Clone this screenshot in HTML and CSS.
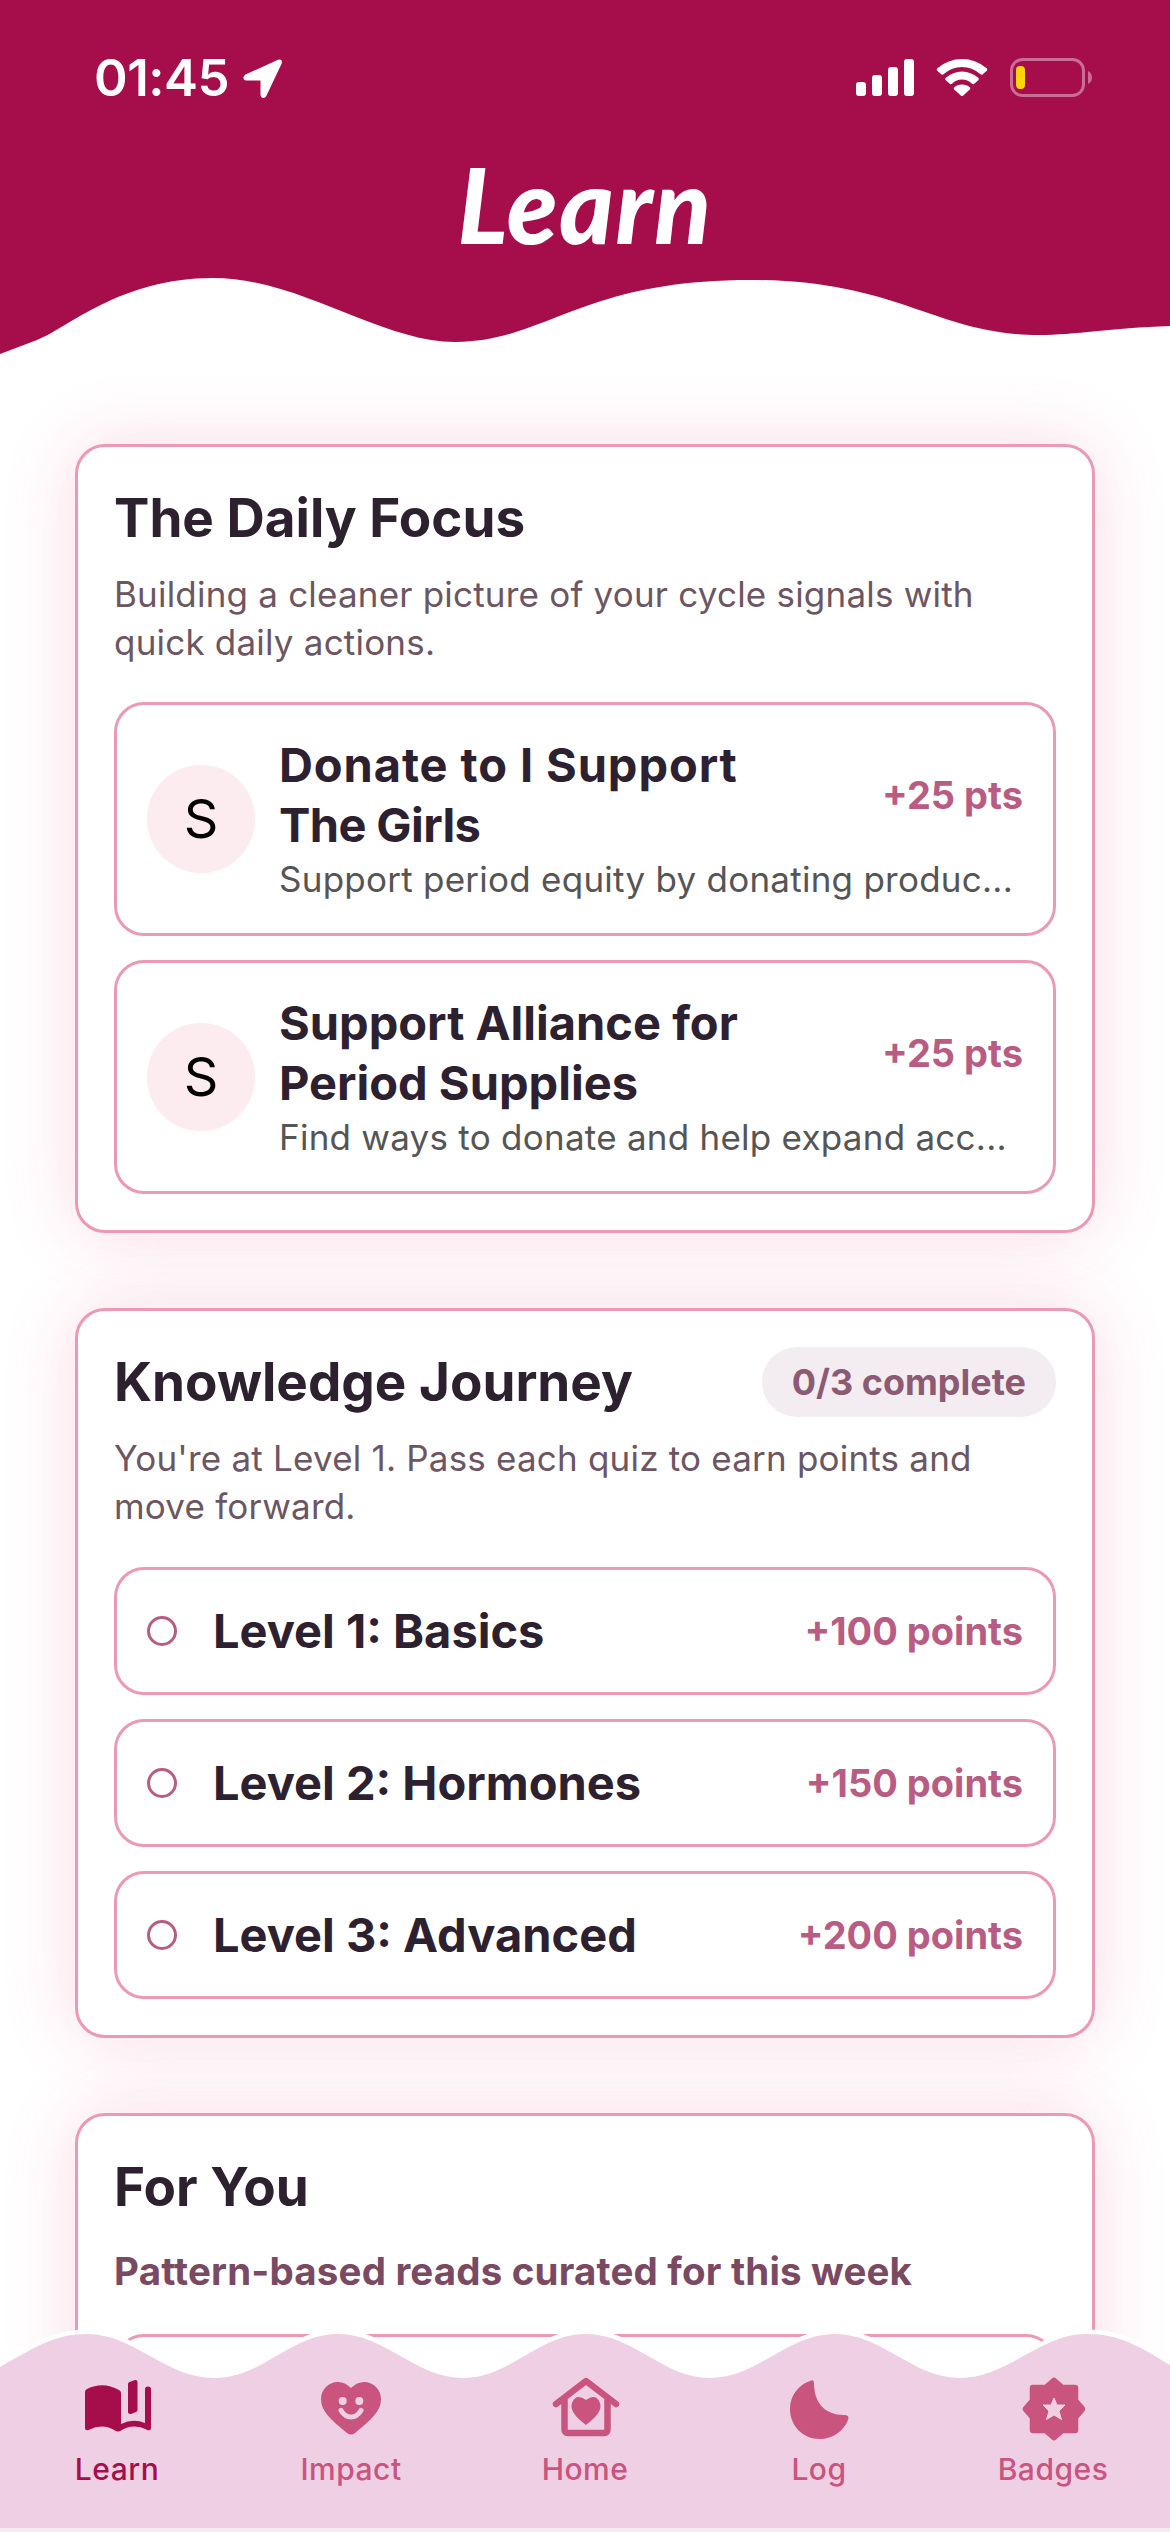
FILE: index.html
```html
<!DOCTYPE html>
<html lang="en">
<head>
  <meta charset="UTF-8">
  <meta name="viewport" content="width=device-width, initial-scale=1.0">
  <title>Learn</title>
  <link rel="stylesheet" href="styles.css">
</head>
<body>
  <header class="header">
    <div class="status-bar">
      <div class="status-left">
        <span class="time">01:45</span>
        <svg class="location" width="40" height="40" viewBox="0 0 40 40"><path d="M35 .8L2.500 15.500Q-.5 17.500 .8 20.200Q1.600 21.500 4 21.500H17.500V35.500Q17.800 39 20.500 39Q22.300 39 23.300 37L38.700 4.500Q39.700 -.8 35 .8Z" fill="#fff"/></svg>
      </div>
      <div class="status-right">
        <svg width="58" height="37" viewBox="0 0 58 37" fill="#fff"><rect x="0" y="23" width="10" height="14" rx="3"/><rect x="16" y="16" width="10" height="21" rx="3"/><rect x="32" y="8" width="10" height="29" rx="3"/><rect x="48" y="0" width="10" height="37" rx="3"/></svg>
        <svg width="52" height="37" viewBox="0 0 52 37" fill="#fff"><path d="M1 9.500Q12 0 26 0T51 9.500Q51.500 10.500 51 11.500L46.500 15.500Q45.500 16 44.500 15.200Q36 8 26 8T7.500 15.200Q6.500 16 5.500 15.500L1 11.500Q.5 10.500 1 9.500Z"/><path d="M9.500 19Q17 12.500 26 12.500T42.500 19Q43 20 42.500 21L38 25Q37 25.500 36 24.700Q31.500 20.500 26 20.500T16 24.700Q15 25.500 14 25L9.500 21Q9 20 9.500 19Z"/><path d="M18 28.500Q21 25.500 26 25.500T34 28.500Q34.500 29.500 34 30.300L27 36.700Q26 37.500 25 36.700L18 30.300Q17.500 29.500 18 28.500Z"/></svg>
        <svg width="82" height="39" viewBox="0 0 82 39"><rect x="1.500" y="1.500" width="72" height="36" rx="11" fill="none" stroke="#cc6b94" stroke-width="3"/><rect x="6" y="8" width="9" height="23" rx="4" fill="#ffd60a"/><path d="M78 13V26Q82 24 82 19.500T78 13Z" fill="#cc6b94"/></svg>
      </div>
    </div>
    <h1 class="page-title">Learn</h1>
    <svg class="header-wave" width="1170" height="90" viewBox="0 0 1170 90"><path d="M0 84L37 70C68 58 120 8 213 8C300 8 380 72 455 72C545 72 580 10 750 10C900 10 935 65 1039 65C1075 65 1110 58 1170 56V90H0Z" fill="#fff"/></svg>
  </header>

  <main class="content">
    <section class="card">
      <div class="card-head">
        <h2 class="card-title">The Daily Focus</h2>
      </div>
      <p class="card-text">Building a cleaner picture of your cycle signals with<br>quick daily actions.</p>
      <div class="list">
        <div class="item task">
          <span class="avatar">S</span>
          <div class="task-body">
            <div class="task-top">
              <h3 class="item-title donate">Donate to I Support<br>The Girls</h3>
              <span class="points">+25 pts</span>
            </div>
            <p class="task-text">Support period equity by donating produc...</p>
          </div>
        </div>
        <div class="item task">
          <span class="avatar">S</span>
          <div class="task-body">
            <div class="task-top">
              <h3 class="item-title">Support Alliance for<br>Period Supplies</h3>
              <span class="points">+25 pts</span>
            </div>
            <p class="task-text">Find ways to donate and help expand acc...</p>
          </div>
        </div>
      </div>
    </section>

    <section class="card">
      <div class="card-head">
        <h2 class="card-title">Knowledge Journey</h2>
        <span class="pill">0/3 complete</span>
      </div>
      <p class="card-text">You're at Level 1. Pass each quiz to earn points and<br>move forward.</p>
      <div class="list levels">
        <div class="item level">
          <span class="ring"></span>
          <h3 class="item-title">Level 1: Basics</h3>
          <span class="points">+100 points</span>
        </div>
        <div class="item level">
          <span class="ring"></span>
          <h3 class="item-title">Level 2: Hormones</h3>
          <span class="points">+150 points</span>
        </div>
        <div class="item level">
          <span class="ring"></span>
          <h3 class="item-title">Level 3: Advanced</h3>
          <span class="points">+200 points</span>
        </div>
      </div>
    </section>

    <section class="card">
      <div class="card-head">
        <h2 class="card-title">For You</h2>
      </div>
      <p class="card-note">Pattern-based reads curated for this week</p>
      <div class="list reads">
        <div class="item read"></div>
      </div>
    </section>
  </main>

  <nav class="tab-bar">
    <svg class="tab-wave" width="1170" height="60" viewBox="0 0 1170 60">
      <path d="M0 42C35 22 55 9 87 9C135 9 165 53 214 53S290 9 338 9S415 53 463 53S538 9 586 9S662 53 710 53S787 9 835 9S912 53 960 53S1039 9 1087 9C1120 9 1140 22 1170 40V60H0Z" fill="#efcfe3" stroke="#fff" stroke-width="9" paint-order="stroke"/>
    </svg>
    <div class="tabs">
      <a class="tab active">
        <svg width="72" height="72" viewBox="0 0 72 72" fill="currentColor"><path d="M4 19Q4 17 6 16Q22 8 38 17Q40 18 40 20V51Q52 45 64 50V16Q64 13.500 67 13.500T70 16V55Q70 58 66.500 57Q52 50 40 57.500Q37 59.500 34 57.500Q22 50 7.500 57Q4 58 4 55Z"/><path d="M47 11Q47 9.500 48.500 9L54 7Q56.500 6.500 56.500 9V37Q56.500 38.500 55 39L50 41Q47 41.500 47 39Z"/></svg>
        <span>Learn</span>
      </a>
      <a class="tab">
        <svg width="72" height="72" viewBox="0 0 72 72"><path d="M36 15Q30 9 23 9C13 9 6 17 6 26C6 38 15 46 32 60Q36 63 40 60C57 46 66 38 66 26C66 17 59 9 49 9Q42 9 36 15Z" fill="currentColor"/><circle cx="27.700" cy="28" r="4" fill="#efcfe3"/><circle cx="44.300" cy="28" r="4" fill="#efcfe3"/><path d="M26 37.500Q30 44 36 44T46 37.500" fill="none" stroke="#efcfe3" stroke-width="5" stroke-linecap="round"/></svg>
        <span>Impact</span>
      </a>
      <a class="tab">
        <svg width="72" height="72" viewBox="0 0 72 72"><path d="M7 31L37 8L67 31M15.500 26V56Q15.500 60 19 60H55Q58.500 60 58.500 56V26" fill="none" stroke="currentColor" stroke-width="6.500" stroke-linecap="round" stroke-linejoin="round"/><path d="M37 27Q27 20 23 30C20 39 31 47 37 52C43 47 54 39 51 30Q47 20 37 27Z" fill="currentColor"/></svg>
        <span>Home</span>
      </a>
      <a class="tab">
        <svg width="72" height="72" viewBox="0 0 72 72"><path d="M27 8Q31 6 31 10C31 30 42 42 61 42Q67 42 65 47C61 58 49 66 37 66C20 66 7 53 7 36C7 23 15 12 27 8Z" fill="currentColor"/></svg>
        <span>Log</span>
      </a>
      <a class="tab">
        <svg width="72" height="72" viewBox="0 0 72 72"><path d="M37 8L45 15H58V28L65 36L58 44V57H45L37 64L29 57H16V44L9 36L16 28V15H29Z" fill="currentColor" stroke="currentColor" stroke-width="6.500" stroke-linejoin="round"/><path d="M37 25L40 32H48L42 38L44.500 46.500L37 42L29.500 46.500L32 38L26 32H34Z" fill="#efcfe3" stroke="#efcfe3" stroke-linejoin="round"/></svg>
        <span>Badges</span>
      </a>
    </div>
  </nav>
</body>
</html>
```

FILE: styles.css
```css
* {
  box-sizing: border-box;
}

body {
  margin: 0;
  width: 1170px;
  height: 2532px;
  overflow: hidden;
  position: relative;
  background: #fff;
  font-family: Inter, "Liberation Sans", sans-serif;
  color: #2d2130;
}

h1, h2, h3, p {
  margin: 0;
}

svg {
  display: block;
  flex: none;
}

/* header */
.header {
  height: 360px;
  background: #a50e4b;
  color: #fff;
  display: flex;
  flex-direction: column;
}

.status-bar {
  height: 156px;
  padding: 0 78px 0 94px;
  display: flex;
  justify-content: space-between;
}

.status-left {
  display: flex;
  padding-top: 47px;
  gap: 14px;
}

.time {
  font-size: 51px;
  font-weight: 600;
  line-height: 62px;
  letter-spacing: -0.5px;
}

.location {
  margin-top: 12px;
}

.status-right {
  display: flex;
  align-items: center;
  height: 39px;
  margin-top: 58px;
  gap: 22px;
}

.page-title {
  height: 114px;
  line-height: 96px;
  text-align: center;
  font-family: Lato, sans-serif;
  font-size: 104px;
  font-weight: 900;
  font-style: italic;
  letter-spacing: 1.5px;
}

.header-wave {
  width: 1170px;
}

/* cards */
.content {
  padding: 84px 75px 0;
  display: flex;
  flex-direction: column;
  gap: 75px;
}

.card {
  border: 3px solid #eb9ab5;
  border-radius: 30px;
  padding: 36px;
  background: #fff;
  box-shadow: 0 0 72px rgba(226, 75, 120, 0.2);
}

.card-head {
  height: 70px;
  display: flex;
  align-items: center;
  justify-content: space-between;
}

.card-title {
  font-size: 53px;
  font-weight: 700;
  line-height: 70px;
}

.pill {
  height: 70px;
  line-height: 70px;
  padding: 0 30px;
  border-radius: 35px;
  background: #f3ecf1;
  color: #8d5a73;
  font-size: 36px;
  font-weight: 700;
}

.card-text {
  margin-top: 17px;
  font-size: 35px;
  line-height: 48px;
  letter-spacing: 0.2px;
  color: #6b5662;
  white-space: nowrap;
}

.card-note {
  margin-top: 25px;
  font-size: 38.5px;
  font-weight: 700;
  line-height: 48px;
  letter-spacing: 0.17px;
  color: #7a4a62;
  white-space: nowrap;
}

.list {
  margin-top: 36px;
  display: flex;
  flex-direction: column;
  gap: 24px;
}

.levels {
  margin-top: 37px;
}

.reads {
  margin-top: 39px;
}

.item {
  border: 3px solid #eb9ab5;
  border-radius: 30px;
  padding: 0 30px;
  display: flex;
  align-items: center;
}

.item-title {
  font-size: 47px;
  font-weight: 700;
  line-height: 60px;
  white-space: nowrap;
}

.donate {
  letter-spacing: -0.6px;
}

.donate::first-line {
  letter-spacing: 0.9px;
}

.points {
  color: #b95c84;
  font-size: 38px;
  font-weight: 700;
  white-space: nowrap;
}

.task {
  height: 234px;
  gap: 24px;
}

.avatar {
  width: 108px;
  height: 108px;
  flex: none;
  border-radius: 50%;
  background: #fcebef;
  color: #000;
  font-size: 54px;
  line-height: 108px;
  text-align: center;
}

.task-body {
  flex: 1;
}

.task-top {
  display: flex;
  align-items: center;
  justify-content: space-between;
}

.task-text {
  font-size: 35px;
  line-height: 48px;
  letter-spacing: 0.25px;
  color: #555;
  white-space: nowrap;
}

.level {
  height: 128px;
}

.ring {
  width: 30px;
  height: 30px;
  border: 3px solid #b95c84;
  border-radius: 50%;
  margin-right: 36px;
}

.level .points {
  margin-left: auto;
}

.read {
  height: 234px;
}

/* bottom tabs */
.tab-bar {
  position: absolute;
  left: 0;
  bottom: 0;
  width: 1170px;
  color: #c9547e;
}

.tabs {
  height: 147px;
  background: #efcfe3;
  border-bottom: 4px solid #f7e9f3;
  display: flex;
}

.tab {
  flex: 1;
  display: flex;
  flex-direction: column;
  align-items: center;
  font-size: 30px;
  font-weight: 500;
  line-height: 36px;
  letter-spacing: 0.5px;
}

.tab svg {
  margin-top: -12px;
}

.tab span {
  margin-top: 6px;
}

.active {
  color: #a50e4b;
}
```
